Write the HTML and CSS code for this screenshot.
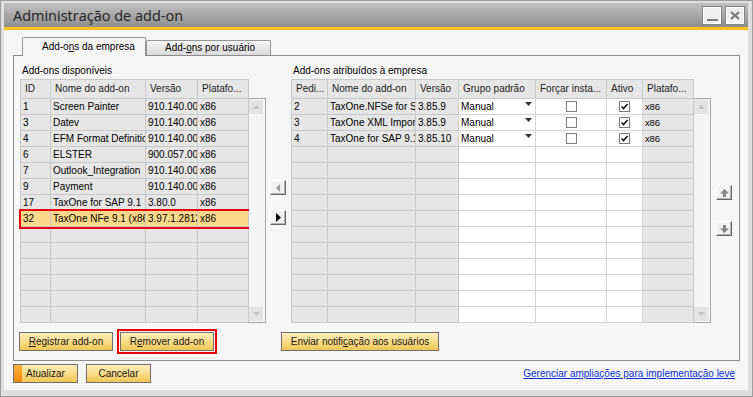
FILE: index.html
```html
<!DOCTYPE html>
<html lang="pt-BR">
<head>
    <meta charset="UTF-8">
    <title>Administração de add-on</title>
    <link rel="stylesheet" href="styles.css">
</head>
<body>
    <div class="window">
        <div class="titlebar">
            <span class="title">Administração de add-on</span>
            <div class="win-btns">
                <span class="win-btn"><span class="min-bar"></span></span>
                <span class="win-btn">
                    <svg width="10" height="9" viewBox="0 0 10 9"><path d="M1 1 L9 8 M9 1 L1 8" stroke="#7a7a7a" stroke-width="2.2"/></svg>
                </span>
            </div>
        </div>

        <div class="content">
            <div class="tabs">
                <div class="tab active">Add-o<u>n</u>s da empresa</div>
                <div class="tab">Add-<u>o</u>ns por usuário</div>
            </div>

            <div class="panel">
                <div class="panel-main">
                    <div class="col-left">
                        <div class="grid-label">Add-ons disponíveis</div>
                        <div class="grid-wrap">
                            <div class="grid grid-avail">
                                <div class="row head">
                                    <div class="cell">ID</div><div class="cell">Nome do add-on</div><div class="cell">Versão</div><div class="cell">Platafo...</div>
                                </div>
                                <div class="row"><div class="cell">1</div><div class="cell">Screen Painter</div><div class="cell">910.140.00.00</div><div class="cell">x86</div></div>
                                <div class="row"><div class="cell">3</div><div class="cell">Datev</div><div class="cell">910.140.00.00</div><div class="cell">x86</div></div>
                                <div class="row"><div class="cell">4</div><div class="cell">EFM Format Definition</div><div class="cell">910.140.00.00</div><div class="cell">x86</div></div>
                                <div class="row"><div class="cell">6</div><div class="cell">ELSTER</div><div class="cell">900.057.00.00</div><div class="cell">x86</div></div>
                                <div class="row"><div class="cell">7</div><div class="cell">Outlook_Integration</div><div class="cell">910.140.00.00</div><div class="cell">x86</div></div>
                                <div class="row"><div class="cell">9</div><div class="cell">Payment</div><div class="cell">910.140.00.00</div><div class="cell">x86</div></div>
                                <div class="row"><div class="cell">17</div><div class="cell">TaxOne for SAP 9.1</div><div class="cell">3.80.0</div><div class="cell">x86</div></div>
                                <div class="row sel"><div class="cell">32</div><div class="cell">TaxOne NFe 9.1 (x86)</div><div class="cell">3.97.1.2813</div><div class="cell">x86</div></div>
                                <div class="row"><div class="cell"></div><div class="cell"></div><div class="cell"></div><div class="cell"></div></div>
                                <div class="row"><div class="cell"></div><div class="cell"></div><div class="cell"></div><div class="cell"></div></div>
                                <div class="row"><div class="cell"></div><div class="cell"></div><div class="cell"></div><div class="cell"></div></div>
                                <div class="row"><div class="cell"></div><div class="cell"></div><div class="cell"></div><div class="cell"></div></div>
                                <div class="row"><div class="cell"></div><div class="cell"></div><div class="cell"></div><div class="cell"></div></div>
                                <div class="row"><div class="cell"></div><div class="cell"></div><div class="cell"></div><div class="cell"></div></div>
                            </div>
                            <div class="vscroll">
                                <span class="scroll-btn"><svg width="7" height="4"><path d="M0 4 L3.5 0 L7 4Z" fill="#c2c2c2"/></svg></span>
                                <span class="scroll-btn"><svg width="7" height="4"><path d="M0 0 L3.5 4 L7 0Z" fill="#c2c2c2"/></svg></span>
                            </div>
                        </div>
                    </div>

                    <div class="col-mid">
                        <span class="arrow-btn"><svg width="4" height="8"><path d="M4 0 V8 L0 4Z" fill="#9c9c9c"/></svg></span>
                        <span class="arrow-btn"><svg width="5" height="9"><path d="M0 0 V9 L5 4.5Z" fill="#000"/></svg></span>
                    </div>

                    <div class="col-right">
                        <div class="grid-label">Add-ons atribuídos à empresa</div>
                        <div class="grid-wrap">
                            <div class="grid grid-assigned">
                                <div class="row head">
                                    <div class="cell">Pedi...</div><div class="cell">Nome do add-on</div><div class="cell">Versão</div><div class="cell">Grupo padrão</div><div class="cell">Forçar insta...</div><div class="cell">Ativo</div><div class="cell">Platafo...</div>
                                </div>
                                <div class="row">
                                    <div class="cell">2</div><div class="cell">TaxOne.NFSe for SAP 9.1</div><div class="cell">3.85.9</div>
                                    <div class="cell w combo">Manual<svg width="7" height="4"><path d="M0 0 H7 L3.5 4Z" fill="#333"/></svg></div>
                                    <div class="cell w check"><span class="box"></span></div>
                                    <div class="cell w check"><span class="box"><svg width="9" height="9"><path d="M1.5 4.5 L3.5 6.5 L7.5 2" stroke="#111" stroke-width="1.6" fill="none"/></svg></span></div>
                                    <div class="cell small">x86</div>
                                </div>
                                <div class="row">
                                    <div class="cell">3</div><div class="cell">TaxOne XML Importer</div><div class="cell">3.85.9</div>
                                    <div class="cell w combo">Manual<svg width="7" height="4"><path d="M0 0 H7 L3.5 4Z" fill="#333"/></svg></div>
                                    <div class="cell w check"><span class="box"></span></div>
                                    <div class="cell w check"><span class="box"><svg width="9" height="9"><path d="M1.5 4.5 L3.5 6.5 L7.5 2" stroke="#111" stroke-width="1.6" fill="none"/></svg></span></div>
                                    <div class="cell small">x86</div>
                                </div>
                                <div class="row">
                                    <div class="cell">4</div><div class="cell">TaxOne for SAP 9.1</div><div class="cell">3.85.10</div>
                                    <div class="cell w combo">Manual<svg width="7" height="4"><path d="M0 0 H7 L3.5 4Z" fill="#333"/></svg></div>
                                    <div class="cell w check"><span class="box"></span></div>
                                    <div class="cell w check"><span class="box"><svg width="9" height="9"><path d="M1.5 4.5 L3.5 6.5 L7.5 2" stroke="#111" stroke-width="1.6" fill="none"/></svg></span></div>
                                    <div class="cell small">x86</div>
                                </div>
                                <div class="row"><div class="cell"></div><div class="cell"></div><div class="cell"></div><div class="cell w"></div><div class="cell w"></div><div class="cell w"></div><div class="cell"></div></div>
                                <div class="row"><div class="cell"></div><div class="cell"></div><div class="cell"></div><div class="cell w"></div><div class="cell w"></div><div class="cell w"></div><div class="cell"></div></div>
                                <div class="row"><div class="cell"></div><div class="cell"></div><div class="cell"></div><div class="cell w"></div><div class="cell w"></div><div class="cell w"></div><div class="cell"></div></div>
                                <div class="row"><div class="cell"></div><div class="cell"></div><div class="cell"></div><div class="cell w"></div><div class="cell w"></div><div class="cell w"></div><div class="cell"></div></div>
                                <div class="row"><div class="cell"></div><div class="cell"></div><div class="cell"></div><div class="cell w"></div><div class="cell w"></div><div class="cell w"></div><div class="cell"></div></div>
                                <div class="row"><div class="cell"></div><div class="cell"></div><div class="cell"></div><div class="cell w"></div><div class="cell w"></div><div class="cell w"></div><div class="cell"></div></div>
                                <div class="row"><div class="cell"></div><div class="cell"></div><div class="cell"></div><div class="cell w"></div><div class="cell w"></div><div class="cell w"></div><div class="cell"></div></div>
                                <div class="row"><div class="cell"></div><div class="cell"></div><div class="cell"></div><div class="cell w"></div><div class="cell w"></div><div class="cell w"></div><div class="cell"></div></div>
                                <div class="row"><div class="cell"></div><div class="cell"></div><div class="cell"></div><div class="cell w"></div><div class="cell w"></div><div class="cell w"></div><div class="cell"></div></div>
                                <div class="row"><div class="cell"></div><div class="cell"></div><div class="cell"></div><div class="cell w"></div><div class="cell w"></div><div class="cell w"></div><div class="cell"></div></div>
                                <div class="row"><div class="cell"></div><div class="cell"></div><div class="cell"></div><div class="cell w"></div><div class="cell w"></div><div class="cell w"></div><div class="cell"></div></div>
                            </div>
                            <div class="vscroll">
                                <span class="scroll-btn"><svg width="7" height="4"><path d="M0 4 L3.5 0 L7 4Z" fill="#c2c2c2"/></svg></span>
                                <span class="scroll-btn"><svg width="7" height="4"><path d="M0 0 L3.5 4 L7 0Z" fill="#c2c2c2"/></svg></span>
                            </div>
                        </div>
                    </div>

                    <div class="col-side">
                        <span class="arrow-btn"><svg width="9" height="8"><path d="M4.5 0 L9 4.5 H6 V8 H3 V4.5 H0Z" fill="#858585"/></svg></span>
                        <span class="arrow-btn"><svg width="9" height="8"><path d="M4.5 8 L9 3.5 H6 V0 H3 V3.5 H0Z" fill="#858585"/></svg></span>
                    </div>
                </div>

                <div class="panel-buttons">
                    <button class="btn btn-reg"><u>R</u>egistrar add-on</button>
                    <span class="mark"><button class="btn btn-reg">R<u>e</u>mover add-on</button></span>
                    <button class="btn btn-notify">Enviar notifi<u>c</u>ação aos usuários</button>
                </div>
            </div>

            <div class="footer">
                <button class="btn btn-small btn-default">Atualizar</button>
                <button class="btn btn-small">Cancelar</button>
                <a href="#" class="link">Gerenciar ampliações para implementação leve</a>
            </div>
        </div>
    </div>
</body>
</html>
```

FILE: styles.css
```css
* {
    box-sizing: border-box;
}

body {
    margin: 0;
    font-family: "Liberation Sans", Arial, sans-serif;
    font-size: 10px;
    color: #000;
    background: #fff;
}

.window {
    width: 753px;
    height: 397px;
    border: 1px solid #9d9d9d;
    background: #dedede;
    padding: 2px 4px 6px 3px;
    display: flex;
    flex-direction: column;
}

.titlebar {
    height: 27px;
    flex-shrink: 0;
    background: linear-gradient(#c1c1c1, #8f8f8f);
    border-bottom: 3px solid #fdbf1c;
    display: flex;
    justify-content: space-between;
    align-items: flex-start;
    padding-left: 9px;
}

.title {
    font-family: "Open Sans", "Liberation Sans", sans-serif;
    font-size: 14.5px;
    line-height: 22px;
    padding-top: 2px;
    color: #202020;
}

.win-btns {
    display: flex;
    gap: 3px;
    margin-top: 3px;
    margin-right: 3px;
}

.win-btn {
    width: 20px;
    height: 19px;
    border: 1px solid #868686;
    box-shadow: inset 0 0 0 1px #fff;
    background: #efefef;
    display: flex;
    justify-content: center;
    align-items: center;
}

.min-bar {
    width: 11px;
    height: 2px;
    background: #7d7d7d;
    margin-top: 9px;
}

.content {
    flex: 1;
    background: #f6f6f6;
    padding: 7px 8px 0 9px;
}

/* abas */
.tabs {
    display: flex;
    align-items: flex-end;
    height: 18px;
    margin-left: 9px;
}

.tab {
    width: 125px;
    height: 15px;
    border: 1px solid #959595;
    border-bottom: none;
    border-radius: 2px 2px 0 0;
    background: linear-gradient(#f6f6f6, #d9d9d9);
    padding-left: 18px;
    line-height: 14px;
    white-space: nowrap;
}

.tab.active {
    width: 124px;
    height: 19px;
    margin-bottom: -1px;
    padding-left: 19px;
    line-height: 18px;
    background: #f6f6f6;
    position: relative;
    z-index: 1;
}

.panel {
    height: 306px;
    border: 1px solid #8c8c8c;
    padding: 8px 0 0 5px;
    display: flex;
    flex-direction: column;
}

.panel-main {
    display: flex;
}

.col-left {
    width: 246px;
    margin-left: 1px;
}

.col-mid {
    width: 25px;
    padding: 116px 0 0 4px;
    display: flex;
    flex-direction: column;
    gap: 15px;
}

.col-right {
    width: 420px;
}

.col-side {
    width: 28px;
    padding: 121px 0 0 5px;
    display: flex;
    flex-direction: column;
    gap: 21px;
}

.grid-label {
    height: 15px;
    line-height: 13px;
    padding-left: 2px;
}

/* grades */
.grid-wrap {
    display: flex;
}

.grid {
    border-left: 1px solid #c9c9c9;
    border-top: 1px solid #c9c9c9;
    font-size: 10px;
}

.row {
    display: grid;
}

.grid-avail .row {
    grid-template-columns: 30px 95px 52px 51px;
}

.grid-assigned .row {
    grid-template-columns: 36px 88px 43px 77px 71px 36px 51px;
}

.cell {
    height: 16px;
    line-height: 15px;
    padding: 0 2px;
    border-right: 1px solid #c9c9c9;
    border-bottom: 1px solid #c9c9c9;
    background: #e6e6e6;
    white-space: nowrap;
    overflow: hidden;
}

.head .cell {
    height: 19px;
    line-height: 17px;
    padding-left: 4px;
    color: #222;
}

.cell.w {
    background: #fff;
    border-right-color: #d4d4d4;
    border-bottom-color: #d4d4d4;
}

.cell.small {
    font-size: 9.5px;
    letter-spacing: -0.2px;
}

.row.sel .cell {
    background: #fcd98a;
}

.row.sel {
    outline: 2px solid #e60012;
}

.combo {
    display: flex;
    justify-content: space-between;
    padding-right: 3px;
}

.combo svg {
    margin-top: 3px;
}

.check {
    display: flex;
    justify-content: center;
    align-items: center;
}

.box {
    width: 11px;
    height: 11px;
    border: 1px solid #7c7c7c;
    background: #fff;
    display: flex;
    justify-content: center;
    align-items: center;
}

.vscroll {
    width: 17px;
    height: 225px;
    margin-top: 19px;
    border: 1px solid #a6a6a6;
    border-left: none;
    background: #f4f4f4;
    padding: 1px 2px 1px 0;
    display: flex;
    flex-direction: column;
    justify-content: space-between;
}

.scroll-btn {
    height: 14px;
    background: #e3e3e3;
    display: flex;
    justify-content: center;
    align-items: center;
}

.arrow-btn {
    width: 16px;
    height: 15px;
    background: #f1f1f1;
    border: 1px solid;
    border-color: #fff #666 #666 #fff;
    box-shadow: inset -1px -1px 0 #b4b4b4;
    display: flex;
    justify-content: center;
    align-items: center;
}

/* botões */
.panel-buttons {
    display: flex;
    align-items: center;
    margin-top: 6px;
}

.btn {
    height: 19px;
    border: 1px solid #6f6f6f;
    background: linear-gradient(#fdefbd, #f4c753);
    font-family: "Liberation Sans", Arial, sans-serif;
    font-size: 10px;
    color: #1a1a1a;
    line-height: 17px;
    padding: 0;
    text-align: center;
    white-space: nowrap;
}

.btn-reg {
    width: 94px;
}

.mark {
    display: flex;
    border: 2px solid #ea0000;
    padding: 1px;
    margin-left: 4px;
}

.btn-notify {
    width: 158px;
    margin-left: 64px;
}

.footer {
    display: flex;
    align-items: center;
    height: 19px;
    margin-top: 3px;
}

.btn-small {
    width: 65px;
    margin-right: 8px;
}

.btn-default {
    background:
        linear-gradient(#fbb43c, #ef8a0c) left top / 8px 100% no-repeat,
        linear-gradient(#fdefbd, #f4c753);
}

.link {
    margin-left: auto;
    margin-right: 5px;
    color: #0b2fd6;
    line-height: 19px;
}
```
